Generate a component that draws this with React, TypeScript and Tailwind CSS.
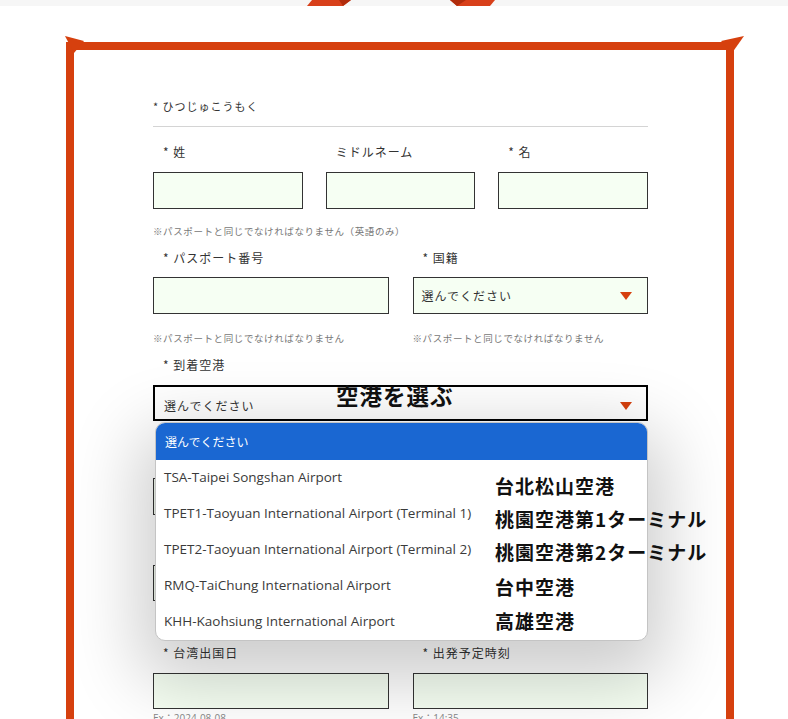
import React from "react";

const JP = { fontFamily: '"Noto Sans CJK JP", "Noto Sans", sans-serif' };
const LATIN = { fontFamily: '"Open Sans", "Noto Sans CJK JP", sans-serif' };

function Caret() {
  return (
    <svg width="12" height="8" viewBox="0 0 12 8" className="shrink-0">
      <polygon points="0,0 12,0 6,8" fill="#d6400e" />
    </svg>
  );
}

function Label({ children }: { children: React.ReactNode }) {
  return (
    <p className="pl-[10px] text-[12px] leading-[16px] tracking-[1px] text-[#333]">{children}</p>
  );
}

function Note({ children, className = "" }: { children: React.ReactNode; className?: string }) {
  return (
    <p className={`text-[9.5px] leading-[14px] tracking-[0.6px] text-[#777] ${className}`}>{children}</p>
  );
}

const box = "w-full border-[1.5px] border-[#333] bg-[#f6fff3]";

const airports = [
  "TSA-Taipei Songshan Airport",
  "TPET1-Taoyuan International Airport (Terminal 1)",
  "TPET2-Taoyuan International Airport (Terminal 2)",
  "RMQ-TaiChung International Airport",
  "KHH-Kaohsiung International Airport",
];

// annotations drawn over the open list
const notes = [
  { text: "台北松山空港", top: "top-[50px]" },
  { text: "桃園空港第1ターミナル", top: "top-[83px]" },
  { text: "桃園空港第2ターミナル", top: "top-[116px]" },
  { text: "台中空港", top: "top-[151px]" },
  { text: "高雄空港", top: "top-[185px]" },
];

export default function App() {
  return (
    <div className="relative h-[719px] overflow-hidden bg-white" style={JP}>
      {/* top ribbon tails */}
      <div className="h-[6px] bg-[#f6f6f6]" />
      <svg className="absolute left-0 top-0" width="788" height="8" viewBox="0 0 788 8">
        <polygon points="312,0 351,0 343,6 307,6" fill="#d8401a" />
        <polygon points="339,0 351,0 343,6" fill="#b02c0c" />
        <polygon points="450,0 495,0 490,6 457,6" fill="#d8401a" />
        <polygon points="450,0 466,0 457,6" fill="#b02c0c" />
      </svg>

      {/* frame */}
      <div className="relative ml-[66px] mt-[36px] w-[668px] border-x-8 border-t-8 border-[#d6400e] pb-[40px]">
        <svg className="absolute left-[-9px] top-[-14px] overflow-visible" width="24" height="20" viewBox="0 0 24 20">
          <polygon points="0,0 19,5 9,17" fill="#d6400e" />
        </svg>
        <svg className="absolute right-[-19px] top-[-14px] overflow-visible" width="24" height="20" viewBox="0 0 24 20">
          <polygon points="23,0 0,5 11,17" fill="#d6400e" />
        </svg>

        <div className="ml-[79px] w-[495px] pt-[48px]">
          <p className="text-[11px] leading-[16px] tracking-[1px] text-[#333]">* ひつじゅこうもく</p>
          <div className="mt-[12px] border-b border-[#d4d4d4]" />

          <div className="mt-[17px] grid grid-cols-3 gap-x-[23px]">
            <div>
              <Label>* 姓</Label>
              <div className={`mt-[12px] h-[37px] ${box}`} />
            </div>
            <div>
              <Label>ミドルネーム</Label>
              <div className={`mt-[12px] h-[37px] ${box}`} />
            </div>
            <div>
              <Label>* 名</Label>
              <div className={`mt-[12px] h-[37px] ${box}`} />
            </div>
          </div>
          <Note className="mt-[15px]">※パスポートと同じでなければなりません（英語のみ）</Note>

          <div className="mt-[12px] grid grid-cols-2 gap-x-[24px]">
            <div>
              <Label>* パスポート番号</Label>
              <div className={`mt-[11px] h-[37px] ${box}`} />
              <Note className="mt-[17px]">※パスポートと同じでなければなりません</Note>
            </div>
            <div>
              <Label>* 国籍</Label>
              <div className={`mt-[11px] flex h-[37px] items-center justify-between pl-[8px] pr-[15px] ${box}`}>
                <span className="text-[12px] tracking-[1px] text-[#333]">選んでください</span>
                <Caret />
              </div>
              <Note className="mt-[17px]">※パスポートと同じでなければなりません</Note>
            </div>
          </div>

          <div className="mt-[12px]">
            <Label>* 到着空港</Label>
          </div>

          {/* arrival airport select, opened */}
          <div className="relative mt-[12px]">
            <div className="flex h-[36px] items-center justify-between border-2 border-black bg-white pl-[9px] pr-[14px] pt-[5px]">
              <span className="text-[12px] tracking-[1px] text-[#333]">選んでください</span>
              <Caret />
            </div>
            <p className="absolute left-[183px] top-[-4px] text-[22.5px] font-bold leading-[28px] tracking-[1px] text-[#111]">
              空港を選ぶ
            </p>

            <div className="absolute left-[2px] right-0 top-[37px] z-10 rounded-[10px] border border-[#c4c4c4] bg-white shadow-[0_24px_70px_16px_rgba(0,0,0,0.2)]">
              <div className="flex h-[37px] items-center rounded-t-[9px] bg-[#1a67d2] pl-[9px] text-[12px] text-white">
                選んでください
              </div>
              {airports.map((a) => (
                <div key={a} className="flex h-[36px] items-start pl-[8px] pt-[7px] text-[13.5px] text-[#3a3a3a]" style={LATIN}>
                  {a}
                </div>
              ))}
              {notes.map((n) => (
                <p
                  key={n.text}
                  className={`absolute left-[339px] ${n.top} whitespace-nowrap text-[19px] font-bold leading-[26px] tracking-[1px] text-[#111]`}
                >
                  {n.text}
                </p>
              ))}
            </div>
          </div>

          {/* rows hidden under the list */}
          <div className="mt-[57px] grid grid-cols-2 gap-x-[24px]">
            <div className={`h-[37px] ${box}`} />
            <div className={`h-[37px] ${box}`} />
          </div>
          <div className="mt-[16px] h-[14px]" />
          <div className="mt-[20px] grid grid-cols-2 gap-x-[24px]">
            <div className={`h-[36px] ${box}`} />
            <div className={`h-[36px] ${box}`} />
          </div>
          <div className="mt-[17px] h-[14px]" />

          <div className="mt-[13px] grid grid-cols-2 gap-x-[24px]">
            <div>
              <Label>* 台湾出国日</Label>
              <div className={`mt-[12px] h-[36px] ${box}`} />
              <p className="mt-[2px] text-[10px] leading-[14px] text-[#888]" style={LATIN}>Ex：2024-08-08</p>
            </div>
            <div>
              <Label>* 出発予定時刻</Label>
              <div className={`mt-[12px] h-[36px] ${box}`} />
              <p className="mt-[2px] text-[10px] leading-[14px] text-[#888]" style={LATIN}>Ex：14:35</p>
            </div>
          </div>
        </div>
      </div>
    </div>
  );
}
